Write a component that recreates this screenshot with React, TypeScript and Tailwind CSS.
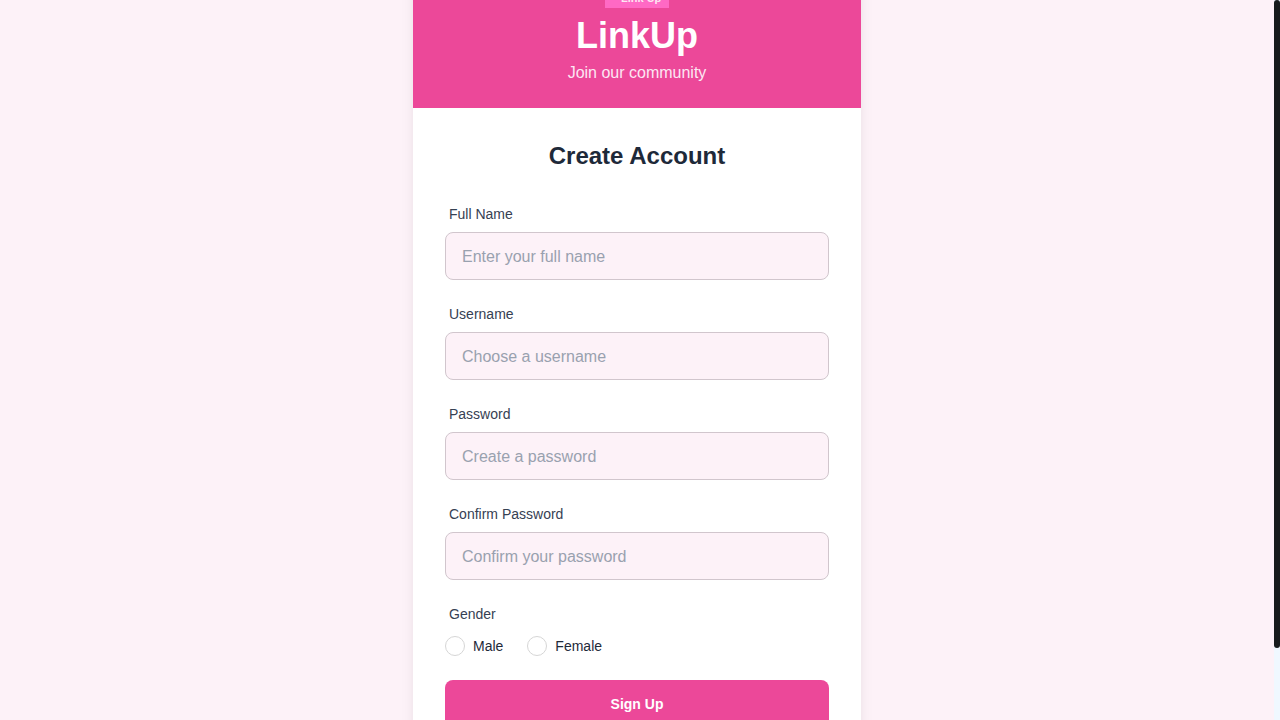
type FieldProps = {
  id: string;
  label: string;
  placeholder: string;
  type?: string;
};

function Field({ id, label, placeholder, type = "text" }: FieldProps) {
  return (
    <div className="flex flex-col gap-2">
      <label htmlFor={id} className="px-1 text-sm text-gray-700">
        {label}
      </label>
      <input
        id={id}
        name={id}
        type={type}
        placeholder={placeholder}
        className="h-12 w-full rounded-lg border border-[#d1c6cd] bg-[#fdf2f8] px-4 pt-0.5 text-base text-gray-800 outline-none placeholder:text-gray-400 focus:border-pink-500"
      />
    </div>
  );
}

function GenderOption({ value }: { value: string }) {
  return (
    <label className="flex items-center gap-2 text-sm text-gray-800">
      <input
        type="radio"
        name="gender"
        value={value}
        className="size-5 appearance-none rounded-full border border-[#d6d6d6] bg-white checked:border-4 checked:border-pink-500"
      />
      {value}
    </label>
  );
}

export default function App() {
  return (
    <div className="flex h-screen overflow-hidden bg-[#fdf2f8] font-['Liberation_Sans',Arial,sans-serif]">
      <main className="flex flex-1 items-center justify-center">
        <div className="w-full max-w-md bg-white shadow-lg">
          <header className="flex flex-col items-center bg-[#ec4899] p-6 text-white">
            <div className="flex size-16 items-end bg-[#ff69c4] pb-0.5 pl-4 text-[11px] leading-4 font-bold whitespace-nowrap text-pink-100">
              Link Up
            </div>
            <h1 className="mt-2 text-4xl font-bold">LinkUp</h1>
            <p className="pt-1.5 text-base leading-[22px] text-pink-100">
              Join our community
            </p>
          </header>
          <section className="p-8">
            <h2 className="text-center text-2xl font-bold text-gray-800">
              Create Account
            </h2>
            <form className="mt-8 flex flex-col gap-6">
              <Field
                id="full-name"
                label="Full Name"
                placeholder="Enter your full name"
              />
              <Field
                id="username"
                label="Username"
                placeholder="Choose a username"
              />
              <Field
                id="password"
                label="Password"
                placeholder="Create a password"
                type="password"
              />
              <Field
                id="confirm-password"
                label="Confirm Password"
                placeholder="Confirm your password"
                type="password"
              />
              <fieldset>
                <legend className="px-1 text-sm text-gray-700">Gender</legend>
                <div className="mt-3 flex gap-6">
                  <GenderOption value="Male" />
                  <GenderOption value="Female" />
                </div>
              </fieldset>
              <button
                type="submit"
                className="h-12 rounded-lg bg-[#ec4899] text-sm font-bold text-white"
              >
                Sign Up
              </button>
            </form>
            <p className="mt-4 text-center text-sm leading-6 text-gray-600">
              Already have an account?{" "}
              <a href="#login" className="text-pink-500">
                Log in
              </a>
            </p>
          </section>
        </div>
      </main>
      <div aria-hidden="true" className="h-full w-1.5 bg-[#f0f8ff]">
        <div className="h-9/10 rounded-full bg-[#171b1c]" />
      </div>
    </div>
  );
}
